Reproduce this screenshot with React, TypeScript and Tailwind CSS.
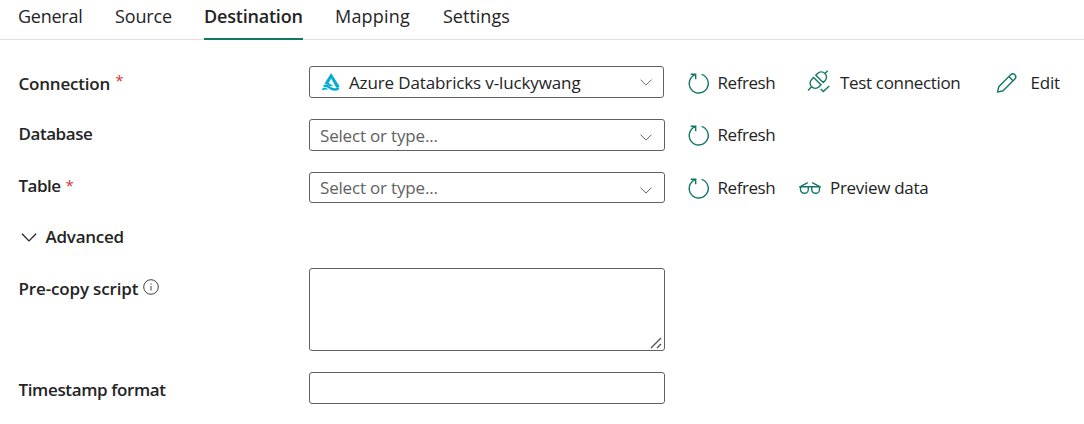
import React from "react";

const iconStroke = "stroke-[#117865] fill-none overflow-visible";

function RefreshIcon() {
  return (
    <svg className={`h-6 w-6 shrink-0 ${iconStroke}`} viewBox="0 0 24 24" strokeWidth="1.4">
      <path d="M14.600 3.400A9.500 9.500 0 1 1 8.300 3.600" />
      <path d="M3.700 3.300H8.700V8.200" />
    </svg>
  );
}

function PlugIcon() {
  return (
    <svg className={`h-6 w-6 shrink-0 ${iconStroke}`} viewBox="0 0 24 24" strokeWidth="1.4">
      <path d="M1 19.400 4.600 15.800M18 2.400 20.700 -.3" />
      <path d="M6.600 6.400 14 13.800 12 15.800A5.230 5.230 0 0 1 4.600 8.400Z" />
      <path d="M8.800 4.200 16.200 11.600 18 9.800A5.230 5.230 0 0 0 10.600 2.400Z" />
      <path d="M13.700 18 16.300 20.600 22.200 14.900" />
    </svg>
  );
}

function PencilIcon() {
  return (
    <svg className={`h-6 w-6 shrink-0 ${iconStroke}`} viewBox="0 0 24 24" strokeWidth="1.4" strokeLinejoin="round">
      <path d="M2.500 21.100 3.900 15.500 15.700 3.700A2.970 2.970 0 0 1 19.900 7.900L8.100 19.700ZM13.800 5.600 18 9.800" />
    </svg>
  );
}

function GlassesIcon() {
  return (
    <svg className={`h-6 w-6 shrink-0 ${iconStroke}`} viewBox="0 0 24 24" strokeWidth="1.4">
      <path d="M1.200 10.700H22.800M2.800 10.300 9.800 6.700M21.200 10.300 14.200 6.700" />
      <path d="M2.500 10.700V13.400A3.900 3.900 0 0 0 10.300 13.400V10.700" />
      <path d="M13.700 10.700V13.400A3.900 3.900 0 0 0 21.500 13.400V10.700" />
    </svg>
  );
}

function Chevron({ className }: { className: string }) {
  return (
    <svg className={`shrink-0 fill-none ${className}`} viewBox="0 0 12 7">
      <path d="M.5 .6 6 6.100 11.500 .6" />
    </svg>
  );
}

function BrandIcon() {
  return (
    <svg className="h-[18px] w-[18px] shrink-0 fill-[#00add4]" viewBox="0 0 18 18">
      <path d="M9.100 0 17.600 13.400Q16.500 15.100 14.300 14.800L9.200 5.400 6.600 9.900 11.600 13.300Q7.500 13.600 2.600 10.600Z" />
      <path d="M2 11.600Q6 11.500 9 14 12.200 16.200 17.300 14.500 17.300 17.700 12.800 17.700 9.600 17.700 7 15.400 4.400 13.400 1 13.700Z" />
      <path d="M.6 15Q4 14.200 6.900 16.700 3.500 15.900 0 17.200Z" />
    </svg>
  );
}

type ActionProps = { icon: React.ReactNode; label: string; className?: string; gap?: string };

function Action({ icon, label, className = "", gap = "ml-[6.5px]" }: ActionProps) {
  return (
    <button className={`flex h-8 items-center ${className}`}>
      {icon}
      <span className={`whitespace-nowrap ${gap}`}>{label}</span>
    </button>
  );
}

type LabelProps = { children: React.ReactNode; required?: boolean; className?: string; starClass?: string };

function Label({ children, required = false, className = "", starClass = "" }: LabelProps) {
  return (
    <div className={`flex w-[309px] shrink-0 pl-[18.5px] font-semibold ${className}`}>
      <span>{children}</span>
      {required && <span className={`text-[15px] font-normal text-[#d13438] ${starClass}`}>*</span>}
    </div>
  );
}

function TypeAhead({ className }: { className: string }) {
  return (
    <div className={`flex w-[356px] items-center rounded-[3px] border border-[#616161] pl-2.5 pr-3 text-[#616161] ${className}`}>
      <span className="flex-1 tracking-[-0.18px]">Select or type...</span>
      <Chevron className="mt-1 h-[7px] w-3 stroke-[#616161]" />
    </div>
  );
}

export default function App() {
  return (
    <main className="h-[424px] w-[1084px] overflow-hidden bg-white font-['Open_Sans',sans-serif] text-[17px] leading-6 text-[#242424]">
      <nav className="flex h-10 items-start border-b border-[#e0e0e0] pl-[18px] pt-1 text-[18px]">
        <span className="w-[97px] tracking-[-0.25px]">General</span>
        <span className="w-[89px] tracking-[-0.15px]">Source</span>
        <span className="h-9 w-[99px] whitespace-nowrap border-b-2 border-[#117865] font-semibold tracking-[-0.2px]">Destination</span>
        <span className="ml-8 w-[108px] tracking-[0.2px]">Mapping</span>
        <span>Settings</span>
      </nav>

      <div className="mt-[26px] flex h-[53px] items-start">
        <Label required className="pt-1.5 tracking-[-0.2px]" starClass="-mt-1 ml-[5px]">Connection</Label>
        <div className="flex h-8 w-[355px] items-center rounded-[3px] border border-[#616161] pl-3 pr-[11px]">
          <BrandIcon />
          <span className="ml-[9px] flex-1 pt-px tracking-[-0.13px]">Azure Databricks v-luckywang</span>
          <Chevron className="h-[7px] w-3 stroke-[#707070]" />
        </div>
        <Action className="ml-[23px] mt-px w-[88px] tracking-[-0.45px]" icon={<RefreshIcon />} label="Refresh" />
        <Action className="ml-8 mt-px w-[154px] tracking-[-0.33px]" gap="ml-[9px]" icon={<PlugIcon />} label="Test connection" />
        <Action className="ml-[34px] mt-px tracking-[-0.2px]" gap="ml-[11.5px]" icon={<PencilIcon />} label="Edit" />
      </div>

      <div className="flex h-[53px] items-start">
        <Label className="pt-[3px] tracking-[-0.45px]">Database</Label>
        <TypeAhead className="h-8 pt-px" />
        <Action className="ml-[22px] w-[88px] tracking-[-0.45px]" icon={<RefreshIcon />} label="Refresh" />
      </div>

      <div className="flex h-[53px] items-start">
        <Label required className="pt-0.5 tracking-[-0.5px]" starClass="-mt-px ml-[5px]">Table</Label>
        <TypeAhead className="h-[31px] pt-px" />
        <Action className="ml-[22px] w-[88px] tracking-[-0.45px]" icon={<RefreshIcon />} label="Refresh" />
        <Action className="ml-[23px] tracking-[-0.3px]" gap="ml-2" icon={<GlassesIcon />} label="Preview data" />
      </div>

      <div className="flex h-[43px] items-start pl-[21px] font-semibold tracking-[-0.25px]">
        <Chevron className="mt-2 h-[9px] w-4 stroke-[#242424]" />
        <span className="ml-[8.5px]">Advanced</span>
      </div>

      <div className="flex h-[104px] items-start">
        <Label className="pt-[9px] tracking-[-0.15px]">
          <span className="flex">
            Pre-copy script
            <svg className="ml-[5px] mt-[1.5px] h-4 w-4 fill-none stroke-[#424242]" viewBox="0 0 16 16">
              <circle cx="8" cy="8" r="7.300" />
              <path d="M8 7V11.500M8 4.400V5.600" />
            </svg>
          </span>
        </Label>
        <div className="flex h-[83px] w-[356px] items-end justify-end rounded-[3px] border border-[#616161] pb-px pr-0.5">
          <svg className="h-3 w-3 fill-none stroke-[#555]" viewBox="0 0 12 12">
            <path d="M1 11 11 1M7 11 11 7" strokeWidth="1.4" />
          </svg>
        </div>
      </div>

      <div className="flex items-start">
        <Label className="pt-1.5 tracking-[-0.37px]">Timestamp format</Label>
        <div className="h-8 w-[356px] rounded-[3px] border border-[#616161]" />
      </div>
    </main>
  );
}
